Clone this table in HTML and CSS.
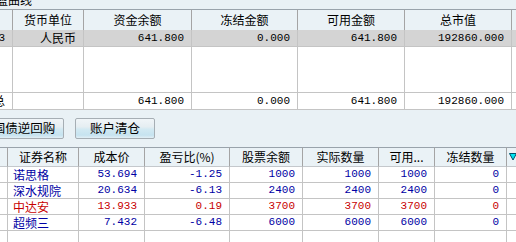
FILE: index.html
```html
<!DOCTYPE html>
<html>
<head>
<meta charset="utf-8">
<link rel="stylesheet" href="styles.css">
</head>
<body>
<div class="title"><span>盈曲线</span></div>

<div class="grid top">
  <div class="h"></div><div class="h">货币单位</div><div class="h">资金余额</div><div class="h">冻结金额</div><div class="h">可用金额</div><div class="h">总市值</div><div class="h last"></div>

  <div class="c sel n">3</div><div class="c sel r">人民币</div><div class="c sel n">641.800</div><div class="c sel n">0.000</div><div class="c sel n">641.800</div><div class="c sel n">192860.000</div><div class="c sel last"></div>

  <div class="c fill"></div><div class="c fill"></div><div class="c fill"></div><div class="c fill"></div><div class="c fill"></div><div class="c fill"></div><div class="c fill last"></div>

  <div class="c r">总</div><div class="c"></div><div class="c n">641.800</div><div class="c n">0.000</div><div class="c n">641.800</div><div class="c n">192860.000</div><div class="c last"></div>
</div>

<div class="buttons">
  <button class="btn">国债逆回购</button>
  <button class="btn">账户清仓</button>
</div>

<div class="grid bottom">
  <div class="h"></div><div class="h">证券名称</div><div class="h">成本价</div><div class="h">盈亏比(%)</div><div class="h">股票余额</div><div class="h">实际数量</div><div class="h">可用...</div><div class="h">冻结数量</div>
  <div class="h last icon"><svg width="8" height="8" viewBox="0 0 8 8"><polygon points="0.5,0.5 7.5,0.5 4,7" fill="#00e4f0" stroke="#00506a" stroke-width="1"/></svg></div>

  <div class="c"></div><div class="c l blue">诺思格</div><div class="c n blue">53.694</div><div class="c n blue">-1.25</div><div class="c n blue">1000</div><div class="c n blue">1000</div><div class="c n blue">1000</div><div class="c n blue">0</div><div class="c last"></div>

  <div class="c"></div><div class="c l blue">深水规院</div><div class="c n blue">20.634</div><div class="c n blue">-6.13</div><div class="c n blue">2400</div><div class="c n blue">2400</div><div class="c n blue">2400</div><div class="c n blue">0</div><div class="c last"></div>

  <div class="c"></div><div class="c l red">中达安</div><div class="c n red">13.933</div><div class="c n red">0.19</div><div class="c n red">3700</div><div class="c n red">3700</div><div class="c n red">3700</div><div class="c n red">0</div><div class="c last"></div>

  <div class="c"></div><div class="c l blue">超频三</div><div class="c n blue">7.432</div><div class="c n blue">-6.48</div><div class="c n blue">6000</div><div class="c n blue">6000</div><div class="c n blue">6000</div><div class="c n blue">0</div><div class="c last"></div>

  <div class="c"></div><div class="c"></div><div class="c"></div><div class="c"></div><div class="c"></div><div class="c"></div><div class="c"></div><div class="c"></div><div class="c last"></div>
</div>
</body>
</html>
```

FILE: styles.css
```css
* { box-sizing: border-box; }
html, body {
  margin: 0;
  padding: 0;
}
body {
  width: 516px;
  height: 242px;
  overflow: hidden;
  background: #e9f1f5;
  font-family: "Noto Sans CJK SC", sans-serif;
  font-size: 12px;
  color: #000;
}
.title {
  height: 9px;
  overflow: hidden;
  line-height: 12px;
}
.title span {
  display: block;
  margin-top: -6px;
  margin-left: -4px;
}
.grid {
  display: grid;
  width: max-content;
}
.top {
  grid-template-columns: 41px 71px 108px 106px 107px 107px 40px;
  grid-template-rows: 21px 17px 46px 17px;
  margin-left: -28px;
}
.bottom {
  grid-template-columns: 8px 71px 66px 85px 73px 76px 56px 72px 20px;
  grid-template-rows: 20px 16px 16px 16px 16px 16px;
}
.h {
  border-top: 1px solid #99a3ab;
  border-right: 1px solid #a4a4a4;
  background: #eaf2f6;
  display: flex;
  align-items: center;
  justify-content: center;
  line-height: 1;
  white-space: nowrap;
  overflow: hidden;
}
.bottom .h { border-bottom: 1px solid #c4c8cc; }
.c {
  background: #fff;
  border-right: 1px solid #c4c4c4;
  border-bottom: 1px solid #c4c4c4;
  display: flex;
  align-items: center;
  white-space: nowrap;
  overflow: hidden;
  line-height: 1;
}
.top .c.fill { border-bottom: 1px solid #c4c4c4; }
.c.sel { background: #d4d4d4; }
.n {
  justify-content: flex-end;
  padding-right: 7px;
  font-family: "Liberation Mono", monospace;
  font-size: 11px;
}
.r {
  justify-content: flex-end;
  padding-right: 7px;
}
.l {
  padding-left: 5px;
}
.blue { color: #0000a4; }
.red { color: #c80000; }
.last { border-right: none; }
.icon {
  justify-content: flex-start;
  padding-left: 2px;
}
.icon svg { display: block; }
.buttons {
  display: flex;
  gap: 11px;
  margin-left: -16px;
  margin-top: 8px;
  margin-bottom: 8px;
}
.btn {
  width: 80px;
  height: 21px;
  padding: 0;
  border: 1px solid #a6aeb4;
  border-radius: 2px;
  font-family: "Noto Sans CJK SC", sans-serif;
  font-size: 12.5px;
  line-height: 1;
  color: #000;
  background: linear-gradient(#f0f5f8 0%, #e6eef2 40%, #d2e9f2 55%, #c6e3ef 85%, #e2eff5 100%);
}
```
